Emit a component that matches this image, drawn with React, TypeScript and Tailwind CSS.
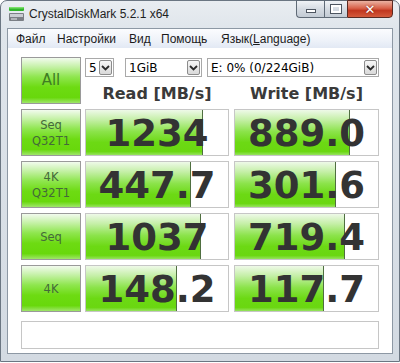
import React from "react";

const greenBtn =
  "bg-[linear-gradient(to_bottom,#f2fbee_0%,#c9f2ad_18%,#8fe64f_42%,#6ddb12_65%,#68d80c_88%,#9fe66a_100%)]";
const greenBar =
  "bg-[linear-gradient(to_bottom,#eef9e8_0%,#c4efa6_22%,#8be34a_48%,#6cd914_72%,#6ad710_92%,#96e35e_100%)]";

function Chevron() {
  return (
    <svg width="9" height="6" viewBox="0 0 9 6">
      <path d="M1 1 L4.5 4.5 L8 1" stroke="#2a2a2a" strokeWidth="1.8" fill="none" />
    </svg>
  );
}

function Combo({ text, className }: { text: string; className: string }) {
  return (
    <div
      className={`h-[19px] border border-[#a9a9a9] bg-white flex items-center justify-between pl-[3px] pr-[1px] ${className}`}
    >
      <span className="text-[12px] leading-none text-black font-['DejaVu_Sans',sans-serif] whitespace-nowrap">
        {text}
      </span>
      <div className="w-[13px] h-[15px] border border-[#8c8c8c] rounded-[2px] bg-[linear-gradient(to_bottom,#f6f6f6,#d9d9d9)] flex items-center justify-center">
        <Chevron />
      </div>
    </div>
  );
}

function Label({ lines }: { lines: string[] }) {
  return (
    <div
      className={`w-[60px] h-[47px] border border-[#9a9a9a] ${greenBtn} flex flex-col items-center justify-center`}
    >
      {lines.map((l) => (
        <span
          key={l}
          className="text-[11.5px] leading-[16px] text-[#44693a] font-['DejaVu_Sans',sans-serif]"
        >
          {l}
        </span>
      ))}
    </div>
  );
}

function Value({ value, pct, w }: { value: string; pct: number; w: string }) {
  return (
    <div className={`${w} h-[47px] border border-[#c6c6c6] bg-white relative overflow-hidden`}>
      <div
        className={`absolute left-0 top-0 bottom-0 ${greenBar} border-r border-[#4f6f40]`}
        style={{ width: `${pct}px` }}
      />
      <div className="relative h-full flex items-center justify-center">
        <span className="text-[37px] leading-none font-bold text-[#333333] font-['DejaVu_Sans',sans-serif] mt-[2px]">
          {value}
        </span>
      </div>
    </div>
  );
}

const rows = [
  { label: ["Seq", "Q32T1"], r: "1234", rp: 117, w: "889.0", wp: 115 },
  { label: ["4K", "Q32T1"], r: "447.7", rp: 105, w: "301.6", wp: 101 },
  { label: ["Seq"], r: "1037", rp: 115, w: "719.4", wp: 110 },
  { label: ["4K"], r: "148.2", rp: 91, w: "117.7", wp: 89 },
];

export default function App() {
  return (
    <div className="w-[400px] h-[363px] bg-white overflow-hidden">
      <div className="w-[400px] h-[362px] rounded-t-[7px] border border-[#6b7682] bg-[linear-gradient(to_bottom,#e9edf1_0%,#dfe5eb_8%,#d3dae2_100%)] flex flex-col">
        {/* Title bar */}
        <div className="h-[27px] flex items-start">
          <div className="flex items-center h-[26px] pl-[7px]">
            <svg width="17" height="16" viewBox="0 0 17 16">
              <rect x="1" y="1" width="15" height="4" rx="1" fill="#2fb52a" />
              <rect x="1" y="1" width="15" height="1.5" rx="1" fill="#7be06a" />
              <rect x="1" y="7" width="15" height="8" rx="1" fill="#7b7f85" />
              <rect x="2" y="8" width="13" height="3" fill="#c9cdd2" />
              <rect x="3" y="12.5" width="6" height="1" fill="#e8eaec" />
            </svg>
            <span className="ml-[4px] text-[12px] text-[#1e1e1e] font-['Liberation_Sans',sans-serif] leading-none">
              CrystalDiskMark 5.2.1 x64
            </span>
          </div>
          <div className="ml-auto mr-[6px] flex h-[18px] -mt-[1px]">
            <div className="w-[28px] h-full border border-[#5f6a76] border-r-0 rounded-bl-[4px] bg-[linear-gradient(to_bottom,#f0f3f6,#d5dbe2_50%,#c3cbd4)] flex items-center justify-center">
              <div className="w-[10px] h-[4px] bg-white border border-[#4d5560] mt-[3px]" />
            </div>
            <div className="w-[23px] h-full border border-[#5f6a76] border-r-0 bg-[linear-gradient(to_bottom,#f0f3f6,#d5dbe2_50%,#c3cbd4)] flex items-center justify-center">
              <div className="w-[10px] h-[8px] border-2 border-white outline outline-1 outline-[#4d5560]" />
            </div>
            <div className="w-[46px] h-full border border-[#5a2a22] rounded-br-[4px] bg-[linear-gradient(to_bottom,#eab2a2,#d8624a_45%,#c1371f_60%,#d45a3c)] flex items-center justify-center">
              <span className="text-white font-bold text-[13px] leading-none font-['DejaVu_Sans',sans-serif] [text-shadow:0_0_2px_#6b1a10]">
                ✕
              </span>
            </div>
          </div>
        </div>

        {/* Window body */}
        <div className="mx-[6px] flex flex-col border border-[#8d98a4]">
          {/* Menu */}
          <div className="h-[19px] bg-[linear-gradient(to_bottom,#fbfcfe,#eef2f9_60%,#e2e9f4)] flex items-center pl-[8px] text-[12px] text-[#1b1b1b] font-['Liberation_Sans',sans-serif] leading-none whitespace-nowrap">
            <span className="w-[41px]">Файл</span>
            <span className="w-[72px]">Настройки</span>
            <span className="w-[32px]">Вид</span>
            <span className="w-[60px]">Помощь</span>
            <span>
              Язык(<span className="underline">L</span>anguage)
            </span>
          </div>

          {/* Client */}
          <div className="h-[305px] bg-white pl-[13px] pt-[9px] flex flex-col">
            <div className="flex">
              <div
                className={`w-[60px] h-[47px] border border-[#9a9a9a] ${greenBtn} flex items-center justify-center`}
              >
                <span className="text-[15px] text-[#3f7d22] font-['DejaVu_Sans',sans-serif] leading-none">
                  All
                </span>
              </div>
              <div className="ml-[4px] w-[294px] flex flex-col">
                <div className="flex mt-[1px]">
                  <Combo text="5" className="w-[29px]" />
                  <Combo text="1GiB" className="ml-[11px] w-[77px]" />
                  <Combo text="E: 0% (0/224GiB)" className="ml-[5px] w-[172px]" />
                </div>
                <div className="flex mt-[8px]">
                  <div className="w-[144px] text-center text-[16px] font-bold text-[#3a3a3a] font-['DejaVu_Sans',sans-serif] leading-[18px]">
                    Read [MB/s]
                  </div>
                  <div className="ml-[5px] w-[145px] text-center text-[16px] font-bold text-[#3a3a3a] font-['DejaVu_Sans',sans-serif] leading-[18px]">
                    Write [MB/s]
                  </div>
                </div>
              </div>
            </div>

            {rows.map((row) => (
              <div key={row.r} className="flex mt-[5px]">
                <Label lines={row.label} />
                <div className="ml-[4px]">
                  <Value value={row.r} pct={row.rp} w="w-[144px]" />
                </div>
                <div className="ml-[5px]">
                  <Value value={row.w} pct={row.wp} w="w-[145px]" />
                </div>
              </div>
            ))}

            <div className="mt-[9px] w-[358px] h-[28px] border border-[#c6c6c6] bg-white" />
          </div>
        </div>
      </div>
    </div>
  );
}
